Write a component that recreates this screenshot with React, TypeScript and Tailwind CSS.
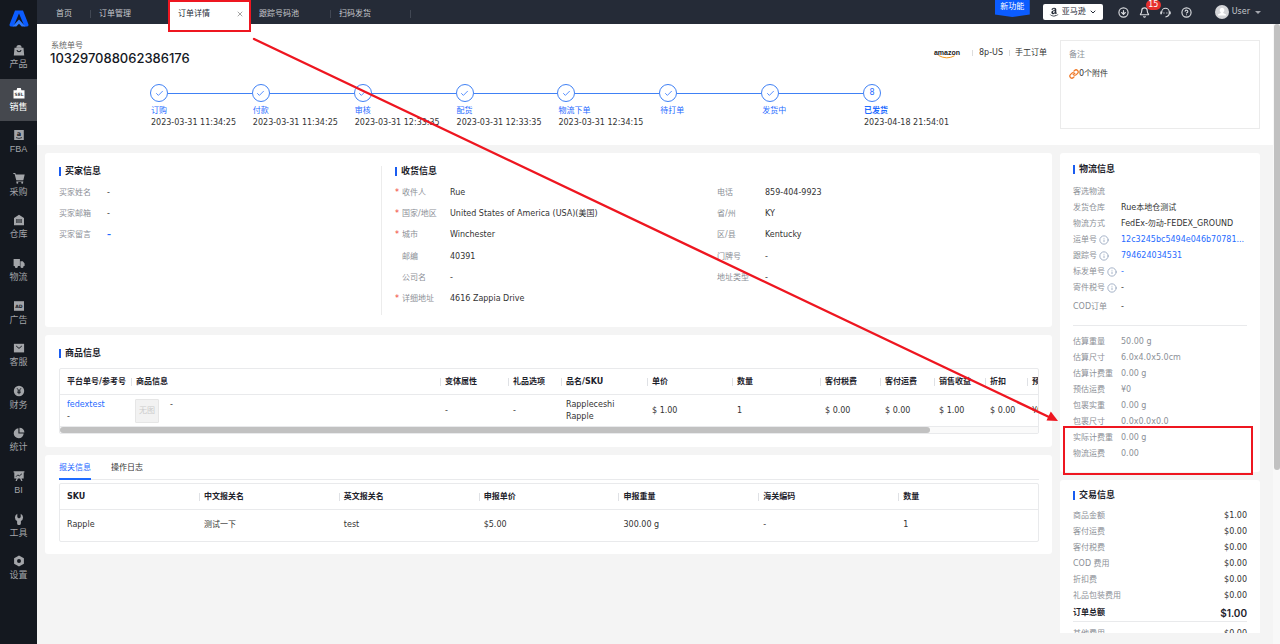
import { ReactNode, useState } from "react";
import { FaAmazon } from "react-icons/fa";
import {
  Bell,
  Check,
  ChevronDown,
  CircleArrowDown,
  CircleQuestionMark,
  Info,
  Link,
  X,
} from "lucide-react";

interface NavItem {
  name: string;
  icon: ReactNode;
}

const NAV: NavItem[] = [
  {
    name: "产品",
    icon: (
      <>
        <path fillRule="evenodd" d="M1.5 3.8h9l.7 7.7H.8zM3.4 6.3a2.7 2.7 0 0 0 5.2 0l-1-.2a1.7 1.7 0 0 1-3.2 0z" />
        <path d="M3.3 3.8a2.7 2.9 0 0 1 5.4 0z" />
      </>
    ),
  },
  {
    name: "销售",
    icon: (
      <>
        <path d="M.5 3.2h11v8.3H.5zM3.6 3.2 4.2 1h3.6l.6 2.2z" />
        <text x="6" y="9" fontSize="4.4" fontWeight="700" textAnchor="middle" className="fill-[#45484e]">SEL</text>
      </>
    ),
  },
  {
    name: "FBA",
    icon: (
      <>
        <path d="M1.2 1h9.6v10H1.2z" />
        <text x="6" y="7.4" fontSize="6.5" fontWeight="700" textAnchor="middle" className="fill-[#14181f]">a</text>
        <path d="M3 8.6q3 1.6 6 0" fill="none" className="stroke-[#14181f]" strokeWidth=".8" />
      </>
    ),
  },
  {
    name: "采购",
    icon: (
      <>
        <path d="M.3 1h2l.5 1.6h8.9L10.4 8H3.2L1.6 2H.3z" />
        <path d="M3.3 8.7h7v.8h-7z" />
        <circle cx="4.3" cy="10.7" r="1" />
        <circle cx="9.2" cy="10.7" r="1" />
      </>
    ),
  },
  {
    name: "仓库",
    icon: <path fillRule="evenodd" d="M6 .8 11 4v7.3H1V4zM3.4 5v4h5.2V5zM4 5.5h4v1H4zm0 1.9h4v1H4z" />,
  },
  {
    name: "物流",
    icon: (
      <>
        <path d="M.6 2h6.3v7H.6zM7.4 4.2h2.4l1.8 2.3V9H7.4z" />
        <circle cx="3.3" cy="9.4" r="1.5" />
        <circle cx="9" cy="9.4" r="1.5" />
      </>
    ),
  },
  {
    name: "广告",
    icon: (
      <>
        <path d="M1 1.2h10v9.6H1z" />
        <text x="6" y="7.7" fontSize="4.6" fontWeight="700" textAnchor="middle" className="fill-[#14181f]">AD</text>
      </>
    ),
  },
  {
    name: "客服",
    icon: (
      <>
        <path d="M.9 1.8h10.2v8.6H.9z" />
        <path d="m3.2 4 2.8 2.4L8.8 4" fill="none" className="stroke-[#14181f]" strokeWidth="1" />
      </>
    ),
  },
  {
    name: "财务",
    icon: (
      <>
        <circle cx="6" cy="6" r="5.2" />
        <path d="M4 3.2 6 5.8l2-2.6M6 5.8v3.4M4.3 6.1h3.4M4.3 7.6h3.4" fill="none" className="stroke-[#14181f]" strokeWidth=".9" />
      </>
    ),
  },
  {
    name: "统计",
    icon: (
      <>
        <path d="M5.4 1.3v5.3h5.3A5 5 0 1 1 5.4 1.3z" />
        <path d="M6.5.7a4.9 4.9 0 0 1 4.9 4.8H6.5z" />
      </>
    ),
  },
  {
    name: "BI",
    icon: (
      <>
        <path d="M.6 1.3h10.8v1.2H.6zM1.3 2.5h9.4v6H1.3zM3.5 8.5h1.4L3.8 11H2.5zM7.1 8.5h1.4l1 2.5H8.2z" />
        <path d="m3 6.7 1.8-1.8 1.5 1L8.9 3.8" fill="none" className="stroke-[#14181f]" strokeWidth=".9" />
      </>
    ),
  },
  {
    name: "工具",
    icon: <path d="M4.3.8v3.4L6 5.4l1.7-1.2V.8a4 4 0 0 1 .2 7.2v2.2a1.9 1.9 0 0 1-3.8 0V8A4 4 0 0 1 4.3.8z" />,
  },
  {
    name: "设置",
    icon: <path fillRule="evenodd" d="M6 .6 10.9 3.2v5.6L6 11.4 1.1 8.8V3.2zM6 4a2 2 0 1 0 0 4 2 2 0 0 0 0-4z" />,
  },
];

const STEPS = [
  { name: "订购", time: "2023-03-31 11:34:25" },
  { name: "付款", time: "2023-03-31 11:34:25" },
  { name: "审核", time: "2023-03-31 12:33:35" },
  { name: "配货", time: "2023-03-31 12:33:35" },
  { name: "物流下单", time: "2023-03-31 12:34:15" },
  { name: "待打单", time: "" },
  { name: "发货中", time: "" },
  { name: "已发货", time: "2023-04-18 21:54:01" },
];

const RECEIVER = [
  { label: "收件人", value: "Rue", required: true },
  { label: "国家/地区", value: "United States of America (USA)(美国)", required: true },
  { label: "城市", value: "Winchester", required: true },
  { label: "邮编", value: "40391", required: false },
  { label: "公司名", value: "-", required: false },
  { label: "详细地址", value: "4616 Zappia Drive", required: true },
];

const CONTACT = [
  ["电话", "859-404-9923"],
  ["省/州", "KY"],
  ["区/县", "Kentucky"],
  ["门牌号", "-"],
  ["地址类型", "-"],
];

const PRODUCT_COLUMNS = [
  { name: "平台单号/参考号", width: "w-[71px]" },
  { name: "商品信息", width: "w-[309px]" },
  { name: "变体属性", width: "w-[68px]" },
  { name: "礼品选项", width: "w-[53px]" },
  { name: "品名/SKU", width: "w-[86px]" },
  { name: "单价", width: "w-[85px]" },
  { name: "数量", width: "w-[88px]" },
  { name: "客付税费", width: "w-[60px]" },
  { name: "客付运费", width: "w-[54px]" },
  { name: "销售收益", width: "w-[51px]" },
  { name: "折扣", width: "w-[42px]" },
  { name: "预估运费", width: "w-[137px]" },
];

const CUSTOMS_COLUMNS = ["SKU", "中文报关名", "英文报关名", "申报单价", "申报重量", "海关编码", "数量"];
const CUSTOMS_ROW = ["Rapple", "测试一下", "test", "$5.00", "300.00 g", "-", "1"];

const SHIPPING = [
  { label: "客选物流", value: "" },
  { label: "发货仓库", value: "Rue本地仓测试" },
  { label: "物流方式", value: "FedEx-勿动-FEDEX_GROUND" },
  { label: "运单号", value: "12c3245bc5494e046b70781...", info: true, link: true },
  { label: "跟踪号", value: "794624034531", info: true, link: true },
  { label: "标发单号", value: "-", info: true, link: true },
  { label: "寄件税号", value: "-", info: true },
];

const MEASURES = [
  ["估算重量", "50.00 g"],
  ["估算尺寸", "6.0x4.0x5.0cm"],
  ["估算计费重", "0.00 g"],
  ["预估运费", "¥0"],
  ["包裹实重", "0.00 g"],
  ["包裹尺寸", "0.0x0.0x0.0"],
  ["实际计费重", "0.00 g"],
  ["物流运费", "0.00"],
];

const FEES = [
  ["商品金额", "$1.00"],
  ["客付运费", "$0.00"],
  ["客付税费", "$0.00"],
  ["COD 费用", "$0.00"],
  ["折扣费", "$0.00"],
  ["礼品包装费用", "$0.00"],
];

function Title({ children }: { children: ReactNode }) {
  return (
    <h2 className="flex h-[18px] items-center gap-1 text-[9px] font-bold text-[#1d222b]">
      <span className="h-[9px] w-[2px] bg-[#1a5cf0]" />
      {children}
    </h2>
  );
}

function HeadCell({ name, first }: { name: string; first: boolean }) {
  return (
    <div className={first ? "flex h-[25px] items-center pl-[7px]" : "flex h-[25px] items-center"}>
      {!first && <span className="mr-1 h-2 w-px shrink-0 bg-[#dfe1e5]" />}
      <span className="whitespace-nowrap">{name}</span>
    </div>
  );
}

function Sidebar() {
  return (
    <aside className="flex w-[37px] shrink-0 flex-col bg-[#14181f] pb-[54px]">
      <a href="#" aria-label="首页" className="flex h-9 items-center justify-center">
        <svg viewBox="0 0 20 17" className="h-[17px] w-5">
          <path d="M6 .5h8L19.5 14.5q.3 2-1.5 2h-2.5L10 3.5 4.5 16.5H2q-1.8 0-1.5-2z" fill="#0b5cff" />
          <path d="M10 9.5 16.500 16.500h-3.800L10 13.800l-2.700 2.700H3.500z" fill="#2f7bff" />
        </svg>
      </a>
      <nav className="flex flex-1 flex-col">
        {NAV.map((item) => (
          <a
            key={item.name}
            href="#"
            className={
              item.name === "销售"
                ? "flex flex-1 flex-col items-center bg-[#45484e] pt-2 text-white"
                : "flex flex-1 flex-col items-center pt-2 text-[#a3a5a9]"
            }
          >
            <svg viewBox="0 0 12 12" fill="currentColor" className="size-3">
              {item.icon}
            </svg>
            <span className="font-['Liberation_Sans','Noto_Sans_CJK_SC',sans-serif] text-[9px] leading-4">{item.name}</span>
          </a>
        ))}
      </nav>
    </aside>
  );
}

function TopBar() {
  return (
    <header className="flex h-6 shrink-0 items-center bg-[#252b37] text-[#c6c8cc]">
      <nav className="flex h-full">
        <a href="#" className="flex w-[53px] items-center pl-[19px] pt-1">首页</a>
        <a href="#" className="flex w-20 items-center pt-1">
          <span className="mr-2 h-2 w-px bg-[#414753]" />
          订单管理
        </a>
        <div className="flex h-[30px] w-[81px] items-center justify-between bg-white pb-[2px] pl-2 pr-[7px] text-[#252b37]">
          <a href="#">订单详情</a>
          <button aria-label="关闭" className="text-[#777]">
            <X className="size-2" />
          </button>
        </div>
        <a href="#" className="flex w-20 items-center justify-between pl-2 pt-1">
          跟踪号码池
          <span className="h-2 w-px bg-[#414753]" />
        </a>
        <a href="#" className="flex w-20 items-center justify-between pl-2 pt-1">
          扫码发货
          <span className="h-2 w-px bg-[#414753]" />
        </a>
      </nav>

      <div className="ml-auto flex h-full items-center pr-[19px]">
        <button className="mr-[13px] h-[17px] w-[35px] self-start bg-[#0b5cff] pb-[4px] text-white [clip-path:polygon(0_0,100%_0,100%_86%,50%_100%,0_86%)]">
          新功能
        </button>
        <label className="relative mr-[15px] flex h-4 w-[60px] items-center rounded-[2px] bg-white text-[#252b37]">
          <FaAmazon className="absolute left-[6px] size-[10px]" />
          <select aria-label="平台" className="h-4 w-full appearance-none pl-[19px] outline-none">
            <option>亚马逊</option>
          </select>
          <ChevronDown className="absolute right-[6px] size-2" strokeWidth={3} />
        </label>
        <div className="flex items-center gap-[10px] text-[#d9dbdf]">
          <button aria-label="下载"><CircleArrowDown className="size-[11px]" strokeWidth={2.5} /></button>
          <button aria-label="通知" className="relative">
            <Bell className="size-[11px]" strokeWidth={2.5} />
            <span className="absolute -top-[7px] left-[7px] z-10 flex h-[10px] w-[15px] items-center justify-center rounded-full bg-[#e6302f] text-[8px] leading-none text-white">
              15
            </span>
          </button>
          <button aria-label="客服">
            <svg viewBox="0 0 12 12" className="size-[11px]" fill="none" stroke="currentColor" strokeWidth="1.2">
              <path d="M1.9 6.5V5.5a4.1 4.1 0 0 1 8.2 0v1.5Q9.8 10.5 6 10.8" />
              <path d="M1.2 5v2.8M10.8 5v2.8" strokeWidth="1.8" />
              <path d="M4.3 6v1M7.5 6v1" />
            </svg>
          </button>
          <button aria-label="帮助"><CircleQuestionMark className="size-[11px]" strokeWidth={2.5} /></button>
        </div>
        <button className="ml-[23px] flex items-center gap-[3px]">
          <svg viewBox="0 0 14 14" className="size-[14px]">
            <circle cx="7" cy="7" r="7" fill="#d3d4d7" />
            <path d="M7 2.8a2.4 2.4 0 0 1 1.3 4.4v.9l2.7 1.3v1.2H3V9.4l2.7-1.3v-.9A2.4 2.4 0 0 1 7 2.8z" fill="#fff" />
          </svg>
          User
          <span className="ml-[2px] border-x-[3px] border-t-[3px] border-x-transparent border-t-[#a3a6ad]" />
        </button>
      </div>
    </header>
  );
}

function OrderHeader() {
  return (
    <section className="flex shrink-0 bg-white pb-4 pr-[13px] pt-4">
      <div className="flex-1">
        <div className="flex items-start justify-between pl-[13px] pr-[13px]">
          <div className="pt-[1px]">
            <p className="pl-px leading-[10px] text-[#666]">系统单号</p>
            <h1 className="font-['Inter',sans-serif] text-[13px] font-medium leading-[14px] text-[#14181f]">103297088062386176</h1>
          </div>
          <div className="flex items-center pt-[7px] text-[#333]">
            <span className="relative mr-3 font-['Liberation_Sans',sans-serif] text-[7px] font-bold leading-3 text-[#222]">
              amazon
              <svg viewBox="0 0 18 4" className="absolute left-1 top-[8px] h-1 w-[18px]">
                <path d="M.5.5Q9 5 16.5.8" fill="none" stroke="#f7981d" strokeWidth="1" />
              </svg>
            </span>
            <span className="h-[6px] w-px bg-[#ddd]" />
            <span className="mx-[6px]">8p-US</span>
            <span className="h-[6px] w-px bg-[#ddd]" />
            <span className="ml-[5px]">手工订单</span>
          </div>
        </div>
        <ol className="mt-[19px] flex pl-[113px] pr-[108px]">
          {STEPS.map((step, i) => {
            const last = i === STEPS.length - 1;
            return (
              <li key={step.name} className={last ? "w-[89px]" : "min-w-0 flex-1"}>
                <div className="flex items-center">
                  <span className="flex size-[18px] shrink-0 items-center justify-center rounded-full border border-[#4081f5] text-[#1f6bff]">
                    {last ? i + 1 : <Check className="size-[9px]" strokeWidth={2} />}
                  </span>
                  {!last && <span className="h-px flex-1 bg-[#4081f5]" />}
                </div>
                <p className={last ? "mt-[3px] pl-px leading-3 font-bold text-[#1f6bff]" : "mt-[3px] pl-px leading-3 text-[#1f6bff]"}>
                  {step.name}
                </p>
                <p className="h-3 whitespace-nowrap pl-px leading-3 text-[#333]">{step.time}</p>
              </li>
            );
          })}
        </ol>
      </div>
      <div className="h-[89px] w-[200px] border border-[#ebebeb] px-2 py-2">
        <p className="leading-3 text-[#8c9097]">备注</p>
        <a href="#" className="mt-[7px] flex items-center leading-3 text-[#333]">
          <Link className="size-[10px] text-[#f07a2a]" strokeWidth={3} />
          0个附件
        </a>
      </div>
    </section>
  );
}

function AddressCard() {
  return (
    <section className="flex rounded-[3px] bg-white pb-[17px] pl-[14px] pt-[9px]">
      <div className="w-[322px]">
        <Title>买家信息</Title>
        <dl className="mt-[2px] grid h-16 grid-rows-3 items-center">
          {["买家姓名", "买家邮箱", "买家留言"].map((label, i) => (
            <div key={label} className="flex">
              <dt className="w-12 text-[#8c9097]">{label}</dt>
              <dd>{i === 2 ? <a href="#" className="font-bold text-[#1f6bff]">–</a> : "-"}</dd>
            </div>
          ))}
        </dl>
      </div>
      <div className="-mb-[5px] mt-1 w-px bg-[#ececec]" />
      <div className="flex-1 pl-[13px]">
        <Title>收货信息</Title>
        <div className="mt-[2px] flex">
          <dl className="grid h-32 w-[322px] grid-rows-6 items-center">
            {RECEIVER.map((row) => (
              <div key={row.label} className="flex">
                <dt className="flex w-[55px] text-[#8c9097]">
                  <span className="w-[7px] text-[#f04134]">{row.required ? "*" : ""}</span>
                  {row.label}
                </dt>
                <dd>{row.value}</dd>
              </div>
            ))}
          </dl>
          <dl className="grid h-32 grid-rows-6 items-center">
            {CONTACT.map(([label, value]) => (
              <div key={label} className="flex">
                <dt className="w-12 text-[#8c9097]">{label}</dt>
                <dd>{value}</dd>
              </div>
            ))}
          </dl>
        </div>
      </div>
    </section>
  );
}

function ProductCard() {
  return (
    <section className="rounded-[3px] bg-white pb-[13px] pl-[14px] pr-[13px] pt-[9px]">
      <Title>商品信息</Title>
      <div className="mt-[6px] overflow-hidden rounded-[2px] border border-[#e9eaec]">
        <table className="w-[1104px] table-fixed text-left">
          <thead className="text-[#1d222b]">
            <tr className="border-b border-[#e9eaec]">
              {PRODUCT_COLUMNS.map((col, i) => (
                <th key={col.name} className={col.width}>
                  <HeadCell name={col.name} first={i === 0} />
                </th>
              ))}
            </tr>
          </thead>
          <tbody>
            <tr className="h-8 border-b border-[#e9eaec]">
              <td className="pl-[7px]">
                <a href="#" className="block text-[#1f6bff]">fedextest</a>
                -
              </td>
              <td className="pl-1">
                <div className="flex">
                  <span className="mr-[11px] flex size-6 items-center justify-center rounded-[1px] border border-[#e6e6e6] bg-[#f2f2f2] text-[#ccc]">
                    无图
                  </span>
                  -
                </div>
              </td>
              <td className="pl-[5px]">-</td>
              <td className="pl-[5px]">-</td>
              <td className="pl-[5px]">
                Rappleceshi
                <br />
                Rapple
              </td>
              {["$ 1.00", "1", "$ 0.00", "$ 0.00", "$ 1.00", "$ 0.00", "¥0"].map((v, i) => (
                <td key={i} className="pl-[5px]">{v}</td>
              ))}
            </tr>
          </tbody>
        </table>
        <div className="h-[6px] bg-[#fafafa]">
          <div className="h-[6px] w-[89%] rounded-full bg-[#c1c1c1]" />
        </div>
      </div>
    </section>
  );
}

function CustomsCard() {
  const [tab, setTab] = useState("报关信息");
  return (
    <section className="rounded-[3px] bg-white pb-3 pl-[14px] pr-[13px]">
      <div className="flex gap-5 border-b border-[#e9eaec]">
        {["报关信息", "操作日志"].map((name) => (
          <button
            key={name}
            onClick={() => setTab(name)}
            className={
              tab === name
                ? "-mb-px h-[25px] border-b-2 border-[#1f6bff] pt-[2px] text-[#1f6bff]"
                : "-mb-px h-[25px] border-b-2 border-transparent pt-[2px] text-[#333]"
            }
          >
            {name}
          </button>
        ))}
      </div>
      <div className="mt-[3px] overflow-hidden rounded-[2px] border border-[#e9eaec]">
        <table className="w-full table-fixed text-left">
          <thead className="text-[#1d222b]">
            <tr className="border-b border-[#e9eaec]">
              {CUSTOMS_COLUMNS.map((name, i) => (
                <th key={name} className={i === 0 ? "w-[139px]" : ""}>
                  <HeadCell name={name} first={i === 0} />
                </th>
              ))}
            </tr>
          </thead>
          <tbody>
            <tr className="h-[31px]">
              {CUSTOMS_ROW.map((v, i) => (
                <td key={i} className={i === 0 ? "pl-[7px]" : "pl-[5px]"}>{v}</td>
              ))}
            </tr>
          </tbody>
        </table>
      </div>
    </section>
  );
}

function ShippingCard() {
  return (
    <section className="shrink-0 rounded-[3px] bg-white px-[13px] pb-[10px] pt-[7px]">
      <Title>物流信息</Title>
      <dl className="mt-[6px]">
        {SHIPPING.map((row) => (
          <div key={row.label} className="flex h-4 items-center">
            <dt className="flex w-12 shrink-0 items-center gap-[2px] text-[#8c9097]">
              {row.label}
              {row.info && <Info className="size-[10px] text-[#94a3bd]" strokeWidth={2} />}
            </dt>
            <dd className={row.link ? "whitespace-nowrap text-[#1f6bff]" : ""}>{row.value}</dd>
          </div>
        ))}
        <div className="mt-[3px] flex h-4 items-center">
          <dt className="w-12 text-[#8c9097]">COD订单</dt>
          <dd>-</dd>
        </div>
      </dl>
      <hr className="mb-2 mt-[10px] border-[#e9eaec]" />
      <dl className="text-[#8c9097]">
        {MEASURES.map(([label, value]) => (
          <div key={label} className="flex h-4 items-center">
            <dt className="w-12">{label}</dt>
            <dd>{value}</dd>
          </div>
        ))}
      </dl>
    </section>
  );
}

function FeeCard() {
  return (
    <section className="shrink-0 rounded-t-[3px] bg-white px-[13px] pt-[6px]">
      <Title>交易信息</Title>
      <dl className="mt-1">
        {FEES.map(([label, value]) => (
          <div key={label} className="flex h-4 items-center justify-between">
            <dt className="text-[#8c9097]">{label}</dt>
            <dd>{value}</dd>
          </div>
        ))}
        <div className="mb-1 flex h-[18px] items-center justify-between border-b border-[#e9eaec] font-bold text-[#1d222b]">
          <dt>订单总额</dt>
          <dd className="font-['Inter',sans-serif] text-[10px] font-semibold">$1.00</dd>
        </div>
        <div className="flex h-4 items-center justify-between">
          <dt className="text-[#8c9097]">其他费用</dt>
          <dd>$0.00</dd>
        </div>
      </dl>
    </section>
  );
}

// Red markers pointing from the open tab to the billed weight and freight
function Annotations() {
  return (
    <svg className="pointer-events-none absolute inset-0 z-20 h-full w-full" fill="none" stroke="#ee1620" strokeWidth="2">
      <rect x="169" y="1" width="81" height="30" />
      <rect x="1064" y="427" width="188" height="47" />
      <path d="M254 39 1049 417" strokeWidth="2.4" strokeLinecap="round" />
      <path d="m1058 421-11.5-.5 4.3-9z" fill="#ee1620" stroke="none" />
    </svg>
  );
}

export default function App() {
  return (
    <div className="relative flex h-screen overflow-hidden bg-[#f4f4f4] font-['DejaVu_Sans','Noto_Sans_CJK_SC',sans-serif] text-[8px] leading-3 text-[#333]">
      <Sidebar />
      <div className="flex min-w-0 flex-1 flex-col">
        <TopBar />
        <div className="flex min-h-0 flex-1">
          <main className="flex min-w-0 flex-1 flex-col">
            <OrderHeader />
            <div className="flex min-h-0 flex-1 gap-2 pb-[11px] pl-2 pr-[13px] pt-2">
              <div className="flex min-w-0 flex-1 flex-col gap-2">
                <AddressCard />
                <ProductCard />
                <CustomsCard />
              </div>
              <div className="flex w-[200px] shrink-0 flex-col gap-2 overflow-hidden">
                <ShippingCard />
                <FeeCard />
              </div>
            </div>
          </main>
          <div className="w-[7px] bg-[#f8f8f8]">
            <div className="ml-px h-[72%] rounded-full bg-[#c1c1c1]" />
          </div>
        </div>
      </div>
      <Annotations />
    </div>
  );
}
